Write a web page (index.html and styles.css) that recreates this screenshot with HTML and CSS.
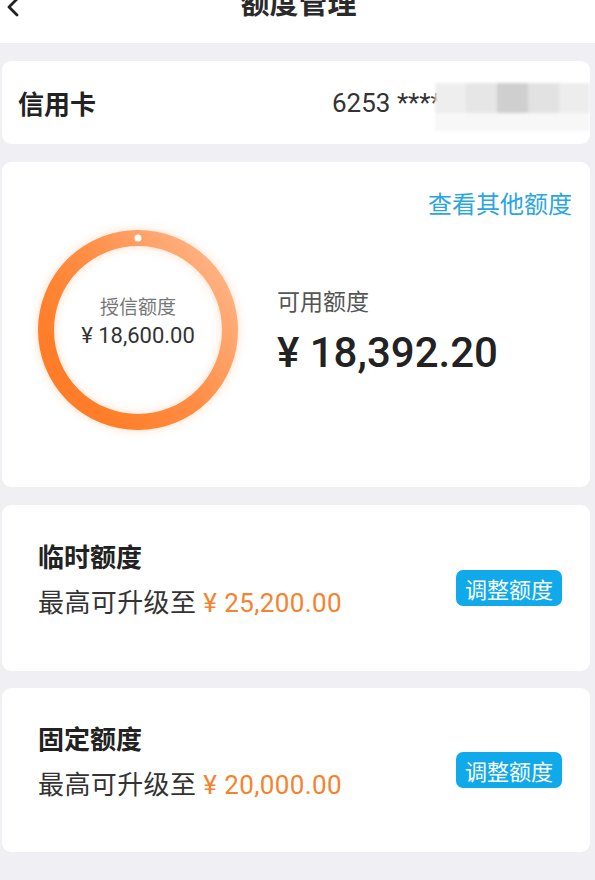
FILE: index.html
```html
<!DOCTYPE html>
<html lang="zh-CN">
<head>
  <meta charset="UTF-8">
  <title>额度管理</title>
  <link rel="stylesheet" href="styles.css">
</head>
<body>

  <div class="header">
    <svg class="back" width="18" height="22" viewBox="0 0 18 22">
      <path d="M14 1 L6 9 L14 17" fill="none" stroke="#222" stroke-width="2.8" stroke-linecap="round" stroke-linejoin="round"/>
    </svg>
    <div class="title">额度管理</div>
  </div>

  <div class="card card-info">
    <span class="label">信用卡</span>
    <span class="card-no">6253 ****</span>
    <div class="mosaic">
      <span class="m1"></span><span class="m2"></span><span class="m3"></span><span class="m4"></span><span class="m5"></span>
    </div>
  </div>

  <div class="card card-quota">
    <div class="link-row"><a class="link">查看其他额度</a></div>
    <div class="quota-row">
      <div class="ring">
        <svg width="200" height="200" viewBox="0 0 200 200">
          <defs>
            <linearGradient id="ringGrad" x1="0.9" y1="0.1" x2="0.1" y2="0.7">
              <stop offset="0" stop-color="#ffb283"/>
              <stop offset="0.55" stop-color="#ff8d44"/>
              <stop offset="1" stop-color="#ff7d28"/>
            </linearGradient>
          </defs>
          <circle cx="100" cy="100" r="92" fill="none" stroke="url(#ringGrad)" stroke-width="16"/>
          <circle cx="100" cy="8" r="3.5" fill="#fff"/>
        </svg>
        <div class="ring-text">
          <div class="ring-label">授信额度</div>
          <div class="ring-amount">¥ 18,600.00</div>
        </div>
      </div>
      <div class="avail">
        <div class="avail-label">可用额度</div>
        <div class="avail-amount">¥ 18,392.20</div>
      </div>
    </div>
  </div>

  <div class="card card-adjust">
    <div class="adjust-text">
      <div class="adjust-title">临时额度</div>
      <div class="adjust-desc">最高可升级至 <span class="orange">¥ 25,200.00</span></div>
    </div>
    <button class="btn" type="button">调整额度</button>
  </div>

  <div class="card card-adjust fixed">
    <div class="adjust-text">
      <div class="adjust-title">固定额度</div>
      <div class="adjust-desc">最高可升级至 <span class="orange">¥ 20,000.00</span></div>
    </div>
    <button class="btn" type="button">调整额度</button>
  </div>

</body>
</html>
```

FILE: styles.css
```css
body {
  margin: 0;
  background-color: #efeff4;
  font-family: Roboto, "Noto Sans CJK SC", sans-serif;
  color: #222;
  height: 880px;
  overflow: hidden;
}
.header {
  height: 43px;
  background-color: #ffffff;
  position: relative;
  overflow: hidden;
}
.back {
  position: absolute;
  left: 3px;
  top: -2px;
}
.title {
  text-align: center;
  font-size: 29px;
  font-weight: bold;
  line-height: 29px;
  margin-top: -10px;
  padding-left: 2px;
  color: #2a2a2a;
}
.card {
  background-color: #ffffff;
  border-radius: 9px;
  margin: 0 5px 0 2px;
}
.card-info {
  margin-top: 18px;
  height: 83px;
  display: flex;
  align-items: center;
  padding: 0 16px 0 16px;
  position: relative;
  overflow: hidden;
}
.label {
  font-size: 26px;
  font-weight: bold;
}
.card-no {
  margin-left: auto;
  width: 242px;
  font-size: 26px;
  color: #333;
}
.mosaic {
  position: absolute;
  left: 433px;
  top: 22px;
  display: flex;
  filter: blur(1.5px);
}
.mosaic span {
  width: 31px;
  height: 30px;
  display: block;
}
.mosaic .m1 { background-color: #eeeeee; }
.mosaic .m2 { background-color: #e6e6e6; }
.mosaic .m3 { background-color: #cfcfcf; }
.mosaic .m4 { background-color: #e2e2e2; }
.mosaic .m5 { background-color: #ededed; }
.mosaic::after {
  content: "";
  position: absolute;
  left: 0;
  top: 30px;
  width: 155px;
  height: 18px;
  background-color: #f7f7f7;
}
.card-quota {
  margin-top: 18px;
  height: 325px;
  box-sizing: border-box;
  padding: 27px 18px 0 36px;
}
.link-row {
  text-align: right;
  line-height: 32px;
}
.link {
  font-size: 24px;
  color: #29a6e1;
}
.quota-row {
  margin-top: 6px;
  display: flex;
  align-items: center;
}
.ring {
  position: relative;
  width: 200px;
  height: 200px;
}
.ring svg {
  display: block;
  filter: drop-shadow(0 0 5px rgba(255, 140, 60, 0.3));
}
.ring-text {
  position: absolute;
  left: 0;
  top: 0;
  width: 200px;
  height: 200px;
  display: flex;
  flex-direction: column;
  align-items: center;
  justify-content: center;
}
.ring-label {
  font-size: 19px;
  color: #777;
  line-height: 28px;
  margin-top: -16px;
}
.ring-amount {
  font-size: 22px;
  color: #333;
  line-height: 28px;
}
.avail {
  margin-left: 39px;
  padding-top: 6px;
}
.avail-label {
  font-size: 23px;
  color: #555;
  line-height: 30px;
  margin-bottom: 10px;
}
.avail-amount {
  font-size: 42px;
  font-weight: 500;
  line-height: 50px;
  color: #222;
}
.card-adjust {
  margin-top: 18px;
  height: 166px;
  display: flex;
  align-items: center;
  justify-content: space-between;
  padding: 0 28px 0 36px;
}
.card-adjust.fixed {
  margin-top: 17px;
  height: 164px;
}
.adjust-text {
  padding-bottom: 15px;
}
.adjust-title {
  font-size: 26px;
  font-weight: bold;
  line-height: 34px;
  margin-bottom: 11px;
}
.adjust-desc {
  font-size: 26px;
  line-height: 34px;
  color: #333;
  letter-spacing: 0.4px;
}
.orange {
  color: #f6822e;
}
.btn {
  background-color: #10aaea;
  color: #ffffff;
  font-family: "Noto Sans CJK SC", sans-serif;
  font-size: 22px;
  border: none;
  border-radius: 7px;
  width: 106px;
  height: 36px;
  padding: 0;
  line-height: 36px;
}
```
